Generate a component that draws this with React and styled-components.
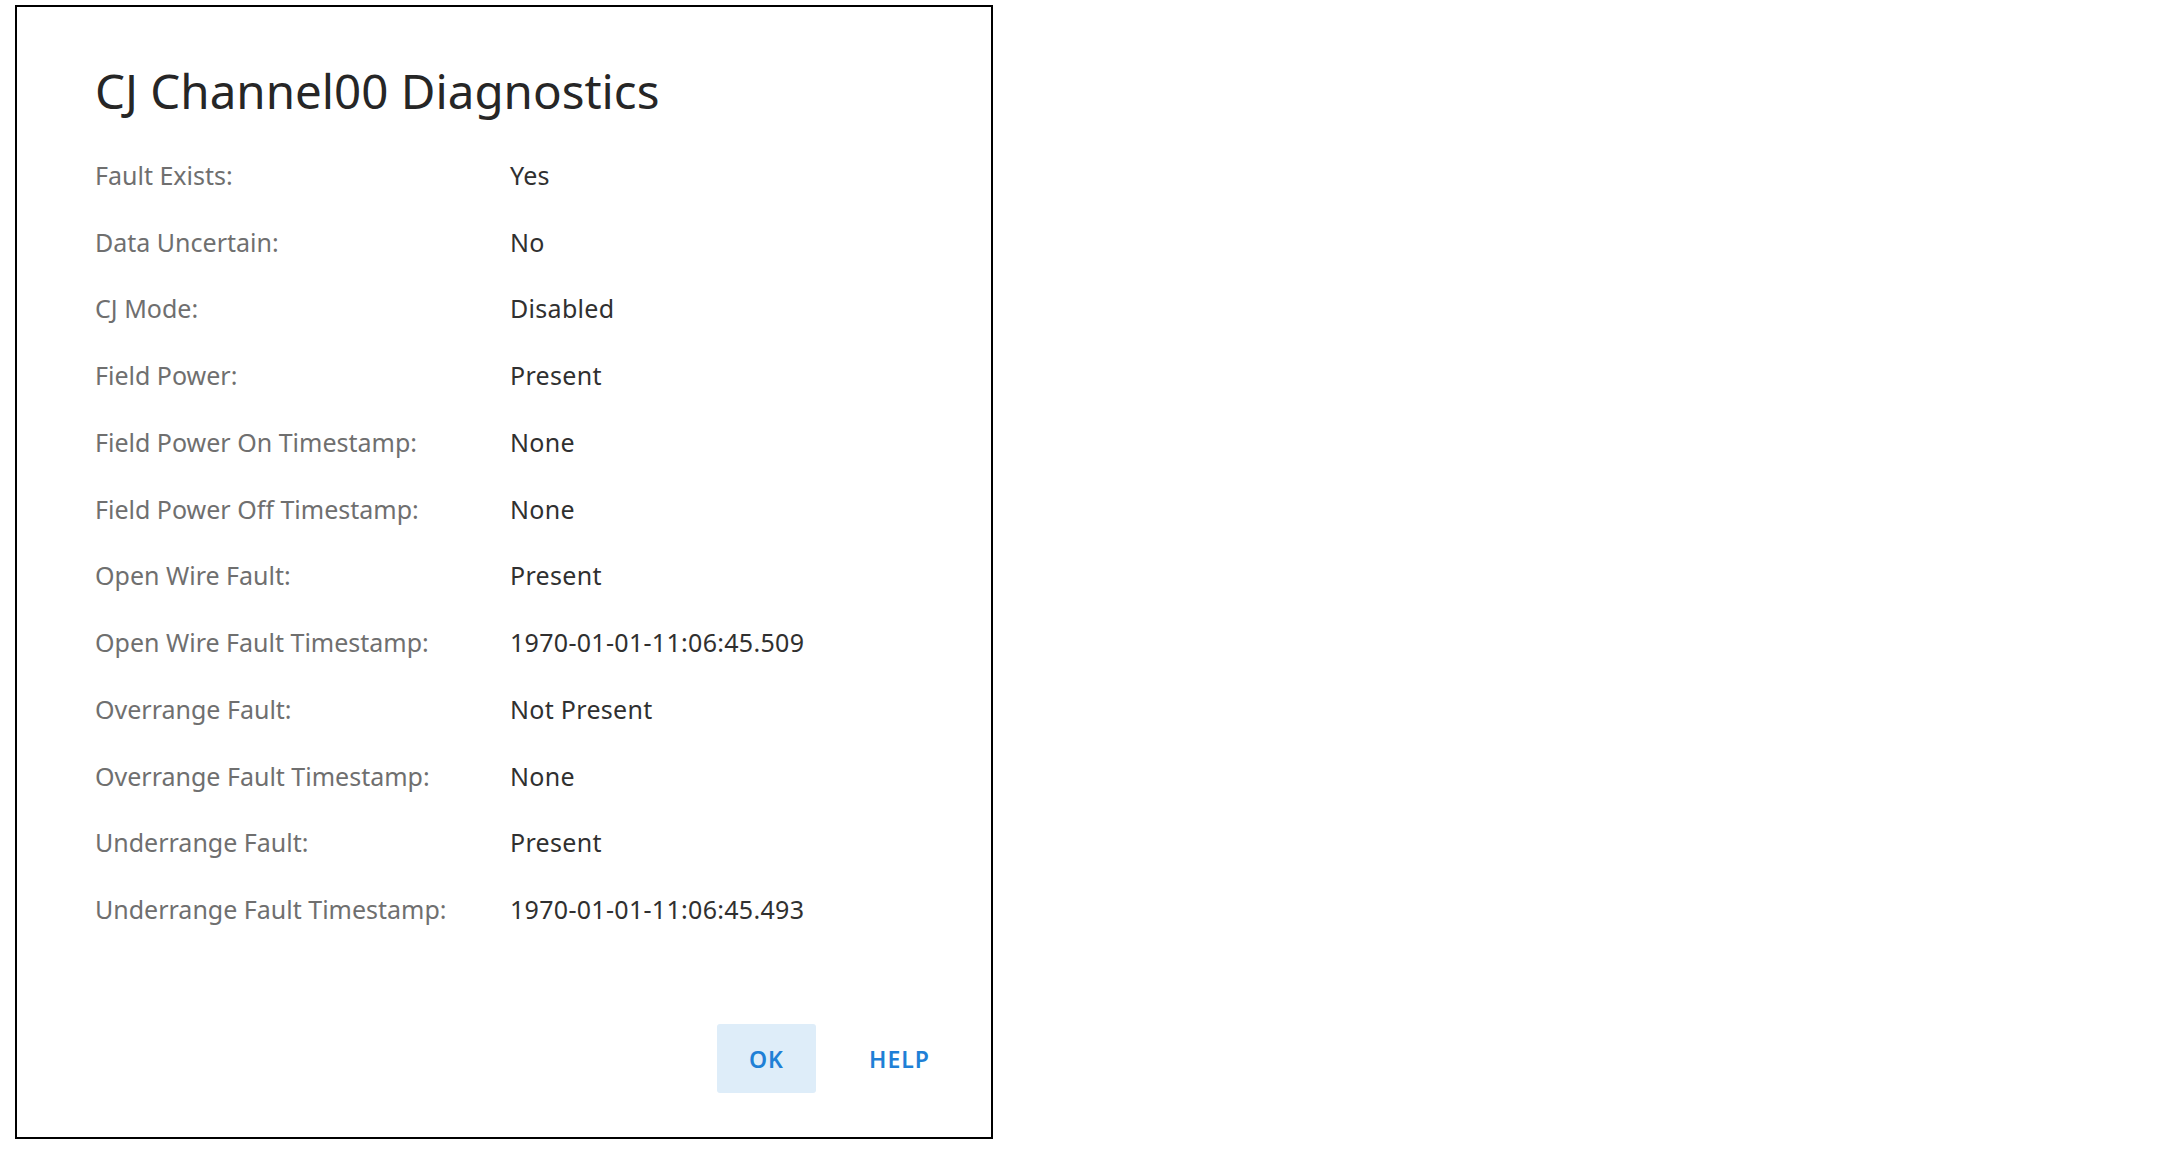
import React from 'react'
import styled, { createGlobalStyle } from 'styled-components'

const GlobalStyle = createGlobalStyle`
    body {
        margin: 0;
        background: #fff;
        font-family: "Noto Sans", "Open Sans", sans-serif;
    }
`

const Dialog = styled.div`
    box-sizing: border-box;
    margin: 5px 0 0 15px;
    width: 978px;
    height: 1134px;
    border: 2px solid #000;
    padding: 60px 42px 44px 78px;
    display: flex;
    flex-direction: column;
`

const Title = styled.h1`
    margin: 0 0 26.5px 0;
    font-size: 47.5px;
    line-height: 48px;
    font-weight: 400;
    color: #262626;
`

const Rows = styled.div`
    display: grid;
    grid-template-columns: 415px 1fr;
    grid-auto-rows: 66.75px;
    align-items: center;
`

const Label = styled.div`
    font-size: 25px;
    color: #6f6f6f;
`

const Value = styled.div`
    font-size: 25px;
    letter-spacing: 0.3px;
    color: #303030;
`

const Footer = styled.div`
    margin-top: auto;
    display: flex;
    justify-content: flex-end;
    gap: 34px;
`

const Button = styled.button`
    width: 99px;
    height: 69px;
    padding: 0;
    border: none;
    border-radius: 3px;
    background: ${p => (p.primary ? '#deedf9' : 'transparent')};
    color: #1f80d6;
    font-family: "Noto Sans", "Open Sans", sans-serif;
    font-size: 23px;
    font-weight: 600;
    letter-spacing: 1px;
    cursor: pointer;
`

const rows = [
    ['Fault Exists:', 'Yes'],
    ['Data Uncertain:', 'No'],
    ['CJ Mode:', 'Disabled'],
    ['Field Power:', 'Present'],
    ['Field Power On Timestamp:', 'None'],
    ['Field Power Off Timestamp:', 'None'],
    ['Open Wire Fault:', 'Present'],
    ['Open Wire Fault Timestamp:', '1970-01-01-11:06:45.509'],
    ['Overrange Fault:', 'Not Present'],
    ['Overrange Fault Timestamp:', 'None'],
    ['Underrange Fault:', 'Present'],
    ['Underrange Fault Timestamp:', '1970-01-01-11:06:45.493'],
]

export default function App() {
    return (
        <>
            <GlobalStyle />
            <Dialog>
                <Title>CJ Channel00 Diagnostics</Title>
                <Rows>
                    {rows.map(([label, value]) => (
                        <React.Fragment key={label}>
                            <Label>{label}</Label>
                            <Value>{value}</Value>
                        </React.Fragment>
                    ))}
                </Rows>
                <Footer>
                    <Button primary>OK</Button>
                    <Button>HELP</Button>
                </Footer>
            </Dialog>
        </>
    )
}
